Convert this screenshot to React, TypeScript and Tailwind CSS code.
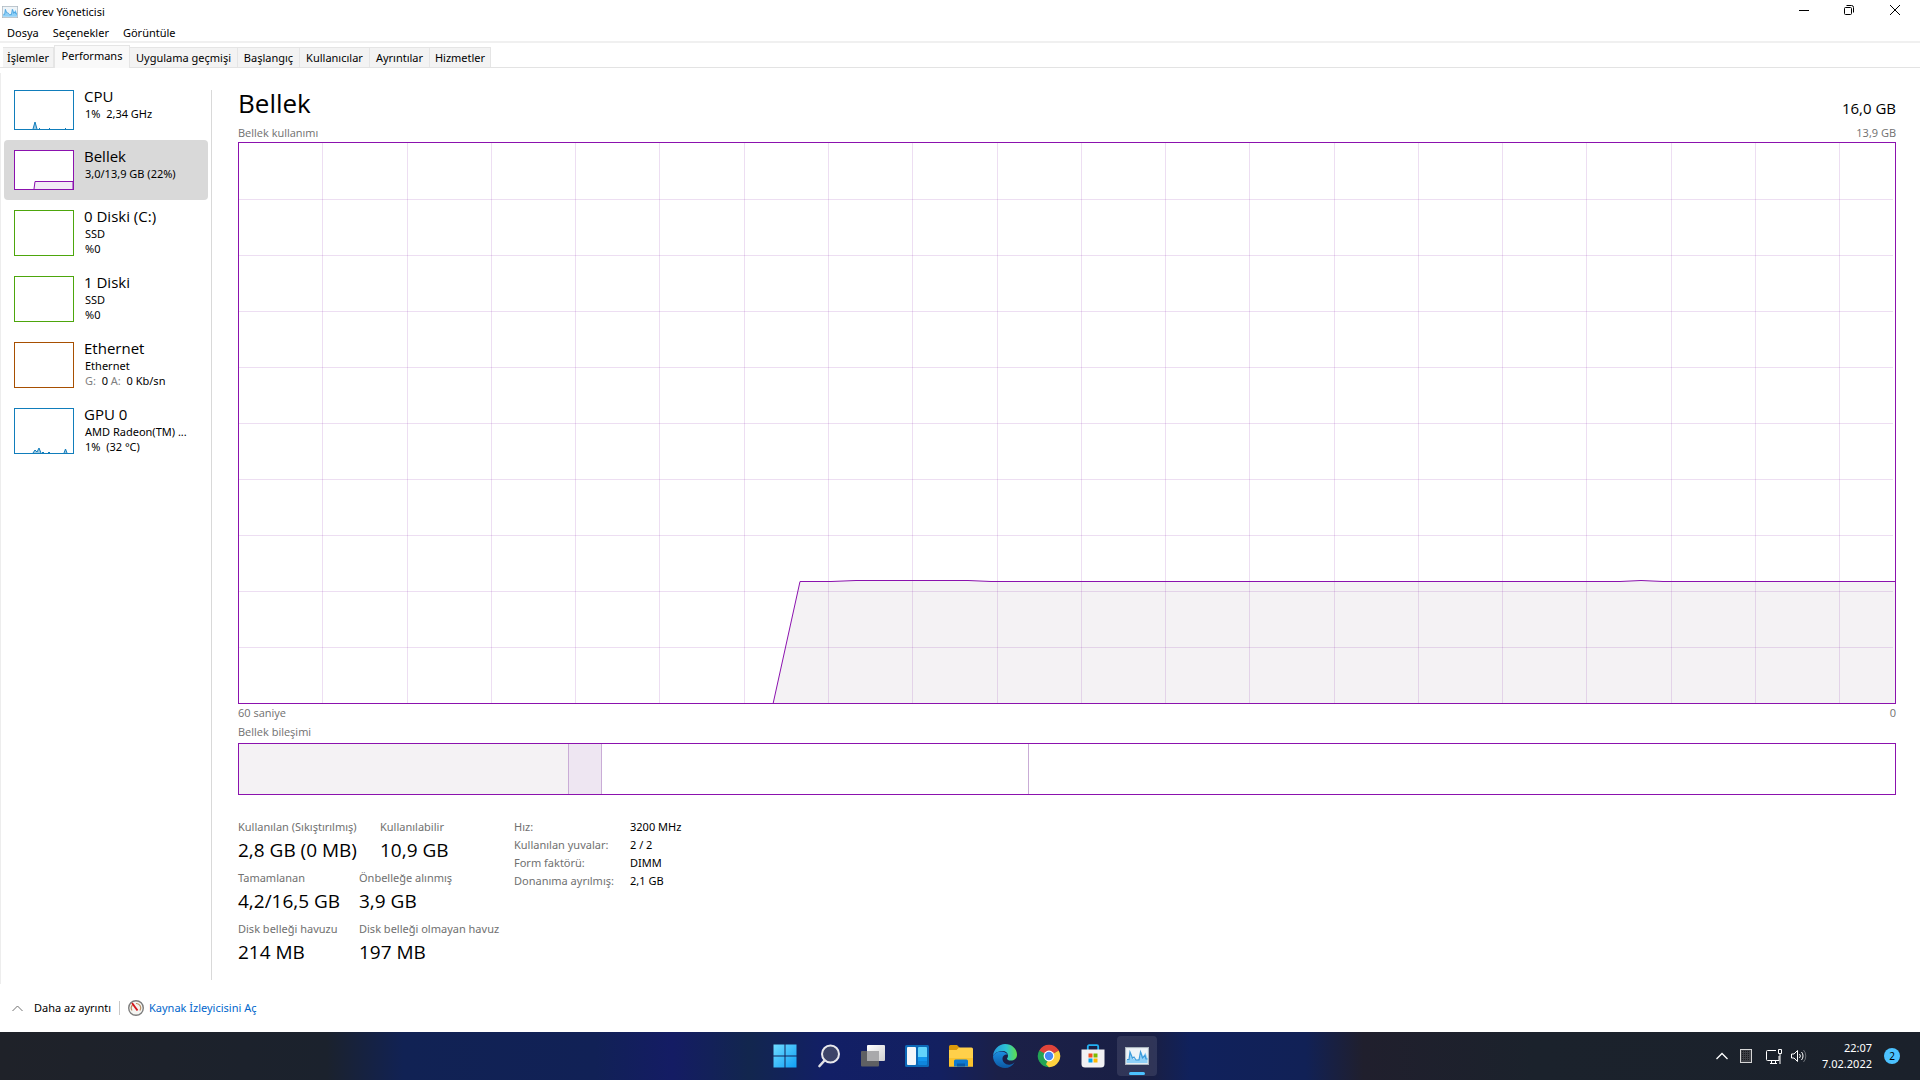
import React from "react";

const MENUS = ["Dosya", "Seçenekler", "Görüntüle"];

const TABS = [
  { label: "İşlemler", width: "w-[51px]" },
  { label: "Performans", width: "w-[76px]", active: true },
  { label: "Uygulama geçmişi", width: "w-[108px]" },
  { label: "Başlangıç", width: "w-[62px]" },
  { label: "Kullanıcılar", width: "w-[70px]" },
  { label: "Ayrıntılar", width: "w-[60px]" },
  { label: "Hizmetler", width: "w-[61px]" },
];

function MonitorIcon({ className }: { className: string }) {
  return (
    <svg viewBox="0 0 24 18" className={className} aria-hidden="true">
      <rect x="0.5" y="0.5" width="23" height="17" fill="#dfe5ea" stroke="#a9b4bd" />
      <rect x="1.5" y="1.5" width="21" height="15" fill="#eef4f8" />
      <path d="M1.5 16V13L4 12l1-7 2.500 6.500L9 12l2.500 1L14.500 12l2-7.500L18 9.500l2.500-4 2 6V16z" fill="#8fd0f7" />
      <path d="M2 12.500h2L5 5l2.500 6L9 10l2 3h3l1.500-8L17.500 11 20 8.500l1 3.500h1.500" fill="none" stroke="#3a9bdc" strokeWidth="1.200" />
    </svg>
  );
}

function TitleBar() {
  return (
    <header className="flex h-6 items-start">
      <div className="flex h-6 flex-1 items-center gap-[5px] pl-0.5">
        <MonitorIcon className="h-3 w-4" />
        <h1 className="text-[11px]">Görev Yöneticisi</h1>
      </div>
      <div className="flex">
        <button aria-label="Simge durumuna küçült" className="flex h-5 w-12 items-center justify-center">
          <svg viewBox="0 0 10 10" className="h-[10px] w-[10px]"><path d="M0 5.500h10" stroke="#000" /></svg>
        </button>
        <button aria-label="Önceki boyut" className="flex h-5 w-[42px] items-center justify-center">
          <svg viewBox="0 0 10 10" className="h-[10px] w-[10px]" fill="none" stroke="#000">
            <rect x="0.500" y="2.500" width="7" height="7" rx="1" />
            <path d="M2.500 0.500h5a2 2 0 0 1 2 2v5" />
          </svg>
        </button>
        <button aria-label="Kapat" className="flex h-5 w-[50px] items-center justify-center">
          <svg viewBox="0 0 10 10" className="h-[10px] w-[10px]"><path d="M0 0l10 10M10 0L0 10" stroke="#000" /></svg>
        </button>
      </div>
    </header>
  );
}

type Device = {
  name: string;
  lines: React.ReactNode[];
  color: string;
  thumb: string;
  selected?: boolean;
  fill?: string;
  line?: string;
};

const DEVICES: Device[] = [
  {
    name: "CPU",
    lines: [<>1%&nbsp; 2,34 GHz</>],
    color: "border-[#117dbb]",
    thumb: "h-10",
    fill: "#9dc9e2",
    line: "M18 38l2-7 2 7M24 37.500h1M34 37.500h1M50 37.500h1",
  },
  {
    name: "Bellek",
    lines: ["3,0/13,9 GB (22%)"],
    color: "border-[#8b12ae]",
    thumb: "h-10",
    selected: true,
    fill: "#f1eaf5",
    line: "M19 38l1-7.500h38V38",
  },
  { name: "0 Diski (C:)", lines: ["SSD", "%0"], color: "border-[#4da60c]", thumb: "h-[46px]" },
  { name: "1 Diski", lines: ["SSD", "%0"], color: "border-[#4da60c]", thumb: "h-[46px]" },
  {
    name: "Ethernet",
    lines: [
      "Ethernet",
      <>
        <span className="text-[#808080]">G:</span>&nbsp; 0 <span className="text-[#808080]">A:</span>&nbsp; 0 Kb/sn
      </>,
    ],
    color: "border-[#a74f01]",
    thumb: "h-[46px]",
  },
  {
    name: "GPU 0",
    lines: ["AMD Radeon(TM) ...", <>1%&nbsp; (32 °C)</>],
    color: "border-[#117dbb]",
    thumb: "h-[46px]",
    fill: "#9dc9e2",
    line: "M18 44l2-3 2 2 2-4 2 5M27 43.500h2M33 43.500h2M49 44l1.500-4 1.500 4",
  },
];

function Sidebar() {
  return (
    <nav aria-label="Aygıtlar" className="w-[211px] shrink-0 border-r border-[#d9d9d9] pr-[3px] pl-[3px]">
      <ul className="-mt-[10px]">
        {DEVICES.map((d) => (
          <li key={d.name}>
            <button
              className={
                d.selected
                  ? "flex w-full gap-[10px] rounded-sm bg-[#d9d9d9] p-[10px] text-left"
                  : "flex w-full gap-[10px] rounded-sm p-[10px] text-left"
              }
            >
              <span className={`w-[60px] shrink-0 border bg-white ${d.thumb} ${d.color}`}>
                {d.line && (
                  <svg className="block h-full w-full" viewBox={d.thumb === "h-10" ? "0 0 58 38" : "0 0 58 44"}>
                    <path d={d.line} fill={d.fill} stroke={d.selected ? "#8b12ae" : "#117dbb"} />
                  </svg>
                )}
              </span>
              <span className="-mt-1 block h-10 whitespace-nowrap">
                <span className="block font-['Open_Sans','Noto_Sans',sans-serif] text-[15px] leading-5">{d.name}</span>
                {d.lines.map((l, i) => (
                  <span key={i} className="block pl-px text-[11px] leading-[15px]">{l}</span>
                ))}
              </span>
            </button>
          </li>
        ))}
      </ul>
    </nav>
  );
}

const COLS = Array.from({ length: 19 }, (_, i) => Math.round((i + 1) * 84.28) - 0.5);
const ROWS = Array.from({ length: 9 }, (_, i) => (i + 1) * 56 + 0.5);
const USAGE =
  "M534 561L561 438.500H592L617 437.500H729L752 438.500H1381L1402 437.500L1424 438.500H1656";

function UsageChart() {
  return (
    <svg
      role="img"
      aria-label="Bellek kullanımı"
      viewBox="0 0 1656 560"
      preserveAspectRatio="none"
      className="block h-[562px] w-full border border-[#8b12ae]"
    >
      <path d={`${USAGE}V560H534z`} fill="#f4f2f4" />
      <g stroke="#8420a5" strokeOpacity="0.150" shapeRendering="crispEdges">
        {COLS.map((x) => (
          <path key={x} d={`M${x} 0V560`} />
        ))}
        {ROWS.map((y) => (
          <path key={y} d={`M0 ${y}H1654`} />
        ))}
      </g>
      <path d={USAGE} fill="none" stroke="#8b12ae" />
    </svg>
  );
}

function Stat({ label, value, width }: { label: string; value: string; width?: string }) {
  return (
    <div className={`whitespace-nowrap ${width ?? ""}`}>
      <dt className="text-[11px] leading-5 text-[#707070]">{label}</dt>
      <dd className="font-['Open_Sans','Noto_Sans',sans-serif] text-[19px] leading-[26px]">{value}</dd>
    </div>
  );
}

const HARDWARE = [
  ["Hız:", "3200 MHz"],
  ["Kullanılan yuvalar:", "2 / 2"],
  ["Form faktörü:", "DIMM"],
  ["Donanıma ayrılmış:", "2,1 GB"],
];

function MemoryPanel() {
  return (
    <section className="min-w-0 flex-1 pr-6 pl-[26px]">
      <div className="flex h-9 items-center justify-between font-['Open_Sans','Noto_Sans',sans-serif]">
        <h2 className="pb-[10px] text-[26px] leading-[30px]">Bellek</h2>
        <span className="text-[15px] leading-7">16,0 GB</span>
      </div>
      <div className="flex h-4 justify-between font-['Open_Sans','Noto_Sans',sans-serif] text-[11px] leading-[14px] text-[#707070]">
        <span>Bellek kullanımı</span>
        <span>13,9 GB</span>
      </div>
      <UsageChart />
      <div className="pb-0.5 font-['Open_Sans','Noto_Sans',sans-serif] text-[11px] leading-[18px] text-[#707070]">
        <div className="flex justify-between pb-px">
          <span>60 saniye</span>
          <span>0</span>
        </div>
        <div>Bellek bileşimi</div>
      </div>
      <div role="img" aria-label="Bellek bileşimi" className="flex h-[52px] border border-[#8b12ae]">
        <div className="w-[19.9%] border-r border-[#c9acd6] bg-[#f4f2f4]" />
        <div className="w-[2%] border-r border-[#c9acd6] bg-[#eee6f2]" />
        <div className="w-[25.8%] border-r border-[#c9acd6]" />
      </div>
      <div className="mt-[22px] flex">
        <dl className="flex w-[276px] flex-col gap-[5px]">
          <div className="flex">
            <Stat width="w-[142px]" label="Kullanılan (Sıkıştırılmış)" value="2,8 GB (0 MB)" />
            <Stat label="Kullanılabilir" value="10,9 GB" />
          </div>
          <div className="flex">
            <Stat width="w-[121px]" label="Tamamlanan" value="4,2/16,5 GB" />
            <Stat label="Önbelleğe alınmış" value="3,9 GB" />
          </div>
          <div className="flex">
            <Stat width="w-[121px]" label="Disk belleği havuzu" value="214 MB" />
            <Stat label="Disk belleği olmayan havuz" value="197 MB" />
          </div>
        </dl>
        <table className="mt-px self-start text-left text-[11px] leading-[18px] whitespace-nowrap">
          <tbody>
            {HARDWARE.map(([k, v]) => (
              <tr key={k}>
                <th scope="row" className="w-[116px] p-0 font-normal text-[#707070]">{k}</th>
                <td className="p-0">{v}</td>
              </tr>
            ))}
          </tbody>
        </table>
      </div>
    </section>
  );
}

function Footer() {
  return (
    <footer className="flex h-12 items-center pl-3 text-[11px]">
      <button className="flex items-center gap-[11px]">
        <svg viewBox="0 0 11 7" className="h-[7px] w-[11px]"><path d="M.5 6L5.500 1l5 5" fill="none" stroke="#707070" /></svg>
        Daha az ayrıntı
      </button>
      <span className="mx-2 h-[14px] w-px bg-[#c8c8c8]" />
      <a href="#kaynak" className="flex items-center gap-[5px] text-[#0066cc]">
        <svg viewBox="0 0 16 16" className="h-4 w-4" aria-hidden="true">
          <circle cx="8" cy="8" r="7.300" fill="#f5f5f2" stroke="#7d7d7d" strokeWidth="1.400" />
          <path d="M4 10.500A4.500 4.500 0 0 1 4.500 5M8 3.500a4.500 4.500 0 0 1 4 7" fill="none" stroke="#b98d62" strokeWidth="1.200" />
          <path d="M4 3l5.500 7.500" stroke="#d4151b" strokeWidth="1.900" />
        </svg>
        Kaynak İzleyicisini Aç
      </a>
    </footer>
  );
}

const StartIcon = () => (
  <svg viewBox="0 0 24 24" className="h-6 w-6">
    <defs>
      <linearGradient id="start" x1="0" y1="0" x2="1" y2="1" gradientUnits="objectBoundingBox">
        <stop offset="0" stopColor="#6fdcff" />
        <stop offset="1" stopColor="#0f9ff5" />
      </linearGradient>
    </defs>
    <path d="M.5 .5h11v11H.5zM12.500 .5h11v11h-11zM.5 12.500h11v11H.5zM12.500 12.500h11v11h-11z" fill="url(#start)" />
  </svg>
);

const SearchIcon = () => (
  <svg viewBox="0 0 24 24" className="h-6 w-6" fill="none">
    <circle cx="13.500" cy="10" r="8.500" fill="#3d4468" stroke="#e8e8ec" strokeWidth="2" />
    <path d="M7.500 16.500L2.500 22" stroke="#e0e0e4" strokeWidth="2.600" strokeLinecap="round" />
  </svg>
);

const TaskViewIcon = () => (
  <svg viewBox="0 0 24 24" className="h-6 w-6">
    <defs>
      <linearGradient id="tv" x1="0" y1="0" x2="1" y2="1">
        <stop offset="0" stopColor="#ffffff" />
        <stop offset="1" stopColor="#cfcfcf" />
      </linearGradient>
    </defs>
    <rect x="0" y="7" width="18" height="15.500" rx="1" fill="#5f6063" />
    <rect x="6" y="1" width="18" height="16" rx="1" fill="url(#tv)" />
    <rect x="6" y="7" width="12" height="10" fill="#a9a9ab" />
  </svg>
);

const WidgetsIcon = () => (
  <svg viewBox="0 0 24 24" className="h-6 w-6">
    <rect x="0" y="1" width="24" height="22" rx="1.500" fill="#0c69b8" />
    <rect x="2" y="3" width="9" height="18" rx="1" fill="#f4f7fa" />
    <path d="M13 4a1 1 0 0 1 1-1h7a1 1 0 0 1 1 1v9h-9z" fill="#62d3fc" />
    <path d="M13 13h9v4h-9z" fill="#1296ee" />
    <path d="M13 17h9v3a1 1 0 0 1-1 1h-7a1 1 0 0 1-1-1z" fill="#0f86dc" />
  </svg>
);

const FolderIcon = () => (
  <svg viewBox="0 0 24 24" className="h-6 w-6">
    <path d="M0 2.500A1.500 1.500 0 0 1 1.500 1H8l2.500 2.500V7H0z" fill="#dc9a0a" />
    <path d="M0 6h7.500L10 3.500h12.500A1.500 1.500 0 0 1 24 5v17.500H0z" fill="#ffd04a" />
    <path d="M0 14h24v8.500H0z" fill="#fbc32d" />
    <path d="M5 22.500V17a1.500 1.500 0 0 1 1.500-1.500h11A1.500 1.500 0 0 1 19 17v5.500z" fill="#0f7ad0" />
    <path d="M8 19.500h8v3H8z" fill="#0a5aa5" />
  </svg>
);

const EdgeIcon = () => (
  <svg viewBox="0 0 24 24" className="h-6 w-6">
    <defs>
      <linearGradient id="edgeTop" x1="0" y1="0.500" x2="1" y2="0.500">
        <stop offset="0" stopColor="#2596dd" />
        <stop offset="0.550" stopColor="#2cc3d4" />
        <stop offset="1" stopColor="#5fdf4a" />
      </linearGradient>
      <linearGradient id="edgeLow" x1="0" y1="0" x2="0" y2="1">
        <stop offset="0" stopColor="#1b8ee0" />
        <stop offset="1" stopColor="#0c59a4" />
      </linearGradient>
    </defs>
    <path d="M0 12C.5 5 6 0 12 0c7 0 12 5 12 10.500 0 4-3 6-6 6-2.500 0-4-1-4-1.800 0-.7 1-1.200 1-3C15 9 12.500 7 9.500 7 4.500 7 1.500 9.500 0 12z" fill="url(#edgeTop)" />
    <path d="M0 12c1.500-2.500 4.500-4.500 8-4.500 3.800 0 6 2 6.800 3.500C13 9.800 10 11 9.500 14c-.5 4 3.500 7.500 8 6.500 1.500-.3 3-1.200 4-2C19.500 22 16 24 12 24 5.500 24 0 19 0 12z" fill="url(#edgeLow)" />
  </svg>
);

const ChromeIcon = () => (
  <svg viewBox="0 0 24 24" className="h-6 w-6">
    <path d="M12 12L2.300 6.400A11.200 11.200 0 0 1 21.700 6.400z" fill="#e0443a" />
    <path d="M12 12l9.700-5.600A11.200 11.200 0 0 1 12 23.200z" fill="#fdd13e" />
    <path d="M12 12v11.200A11.200 11.200 0 0 1 2.300 6.400z" fill="#23a455" />
    <path d="M12 6.800h10l-.5-1L12 4z" fill="#e0443a" />
    <path d="M16.500 14.600L12 23.200l-3-3 3-6z" fill="#fdd13e" />
    <path d="M2.300 6.400l5.200 8.200 3-5z" fill="#23a455" />
    <path d="M2.300 6.400l5.200 3.200L12 6.800 9 4z" fill="#e0443a" />
    <circle cx="12" cy="12" r="5.400" fill="#fff" />
    <circle cx="12" cy="12" r="4.200" fill="#4688f4" />
  </svg>
);

const StoreIcon = () => (
  <svg viewBox="0 0 24 24" className="h-6 w-6">
    <path d="M6.800 6V2.500A1.300 1.300 0 0 1 8.100 1.200h7.800a1.300 1.300 0 0 1 1.300 1.300V6" fill="none" stroke="#22b0f2" strokeWidth="1.800" />
    <path d="M.5 5.500h23V20a3.500 3.500 0 0 1-3.500 3.500H4A3.500 3.500 0 0 1 .5 20z" fill="#f1f1f3" />
    <path d="M7.500 9.500h4v4h-4z" fill="#f25022" />
    <path d="M12.500 9.500h4v4h-4z" fill="#7fba00" />
    <path d="M7.500 14.500h4v4h-4z" fill="#00a4ef" />
    <path d="M12.500 14.500h4v4h-4z" fill="#ffb900" />
  </svg>
);

const APPS = [
  { name: "Başlat", icon: <StartIcon /> },
  { name: "Ara", icon: <SearchIcon /> },
  { name: "Görev görünümü", icon: <TaskViewIcon /> },
  { name: "Pencere öğeleri", icon: <WidgetsIcon /> },
  { name: "Dosya Gezgini", icon: <FolderIcon /> },
  { name: "Microsoft Edge", icon: <EdgeIcon /> },
  { name: "Google Chrome", icon: <ChromeIcon /> },
  { name: "Microsoft Store", icon: <StoreIcon /> },
  { name: "Görev Yöneticisi", icon: <MonitorIcon className="h-[18px] w-6" />, active: true },
];

function Taskbar() {
  return (
    <div className="grid h-12 grid-cols-[1fr_auto_1fr] items-center bg-[linear-gradient(to_right,#1f2229,#1b222d_17%,#112254_21%,#112156_31%,#141c64_35%,#12264e_39%,#121f66_43%,#132060_49%,#1b2048_52%,#191f44_60%,#10215c_62%,#112156_68%,#201f2d_71%,#1b222c_80%,#1b212b)] text-white">
      <span />
      <div className="flex gap-1 pl-0.5">
        {APPS.map((a) => (
          <button
            key={a.name}
            aria-label={a.name}
            className={
              a.active
                ? "relative flex h-10 w-10 items-center justify-center rounded bg-white/10"
                : "flex h-10 w-10 items-center justify-center rounded"
            }
          >
            {a.icon}
            {a.active && <span className="absolute bottom-px left-3 h-[3px] w-4 rounded-full bg-[#4cc2ff]" />}
          </button>
        ))}
      </div>
      <div className="flex items-center justify-end pr-5">
        <button aria-label="Gizli simgeleri göster" className="mr-3">
          <svg viewBox="0 0 12 8" className="h-2 w-3"><path d="M.5 7L6 1.500 11.500 7" fill="none" stroke="#fff" strokeWidth="1.300" /></svg>
        </button>
        <svg viewBox="0 0 12 14" className="mr-[14px] h-[14px] w-3">
          <rect x="0.500" y="0.500" width="11" height="13" fill="#3d3f45" stroke="#d6d6d6" />
          <path d="M2.500 2v10M4.500 2v10M6.500 2v10M8.500 2v10" stroke="#17191d" strokeDasharray="1 1" />
        </svg>
        <button aria-label="Ağ ve ses" className="mr-[15px] flex items-center gap-2">
          <svg viewBox="0 0 17 17" className="h-[17px] w-[17px]" fill="none" stroke="#fff">
            <path d="M10 2.500H1.500a1 1 0 0 0-1 1v8a1 1 0 0 0 1 1h11.500V8M4 15.500h7M5.500 12.500v3M9.500 12.500v3" />
            <path d="M12.500 1.500h3v4h-3zM14 5.500V16" />
          </svg>
          <svg viewBox="0 0 16 14" className="h-[14px] w-4" fill="none" stroke="#fff">
            <path d="M.5 5v4h2.500l3.500 3.500v-11L3 5z" />
            <path d="M8.500 5a3 3 0 0 1 0 4M10.500 3a6 6 0 0 1 0 8" />
            <path d="M12.500 1a9 9 0 0 1 0 12" strokeOpacity="0.350" />
          </svg>
        </button>
        <time className="mr-3 text-right text-[11px] leading-4">
          22:07
          <br />
          7.02.2022
        </time>
        <span className="flex h-4 w-4 items-center justify-center rounded-full bg-[#4cc2ff] text-[10px] leading-4 text-black">2</span>
      </div>
    </div>
  );
}

export default function App() {
  return (
    <div className="flex min-h-screen flex-col bg-white font-['Noto_Sans','Open_Sans',sans-serif] text-black">
      <TitleBar />
      <div className="flex h-[19px] border-b-2 border-[#f0f0f0] pl-[7px] text-[11px]">
        {MENUS.map((m) => (
          <button key={m} className="mr-[14px] leading-[17px]">{m}</button>
        ))}
      </div>
      <div role="tablist" className="flex h-[25px] items-end border-b border-[#e3e3e3] pl-[3px] text-[11px] whitespace-nowrap">
        {TABS.map((t) => (
          <button
            key={t.label}
            role="tab"
            aria-selected={!!t.active}
            className={
              t.active
                ? `${t.width} -mb-px h-[23px] border border-b-0 border-[#e5e5e5] bg-[#f9f9f9] pb-0.5`
                : `${t.width} h-5 border-t border-r border-[#e5e5e5] bg-[#f3f3f3] pt-0.5`
            }
          >
            {t.label}
          </button>
        ))}
      </div>
      <main className="mt-[5px] flex flex-1 border-l border-[#ededed] pt-[17px] pb-1">
        <Sidebar />
        <MemoryPanel />
      </main>
      <Footer />
      <Taskbar />
    </div>
  );
}
